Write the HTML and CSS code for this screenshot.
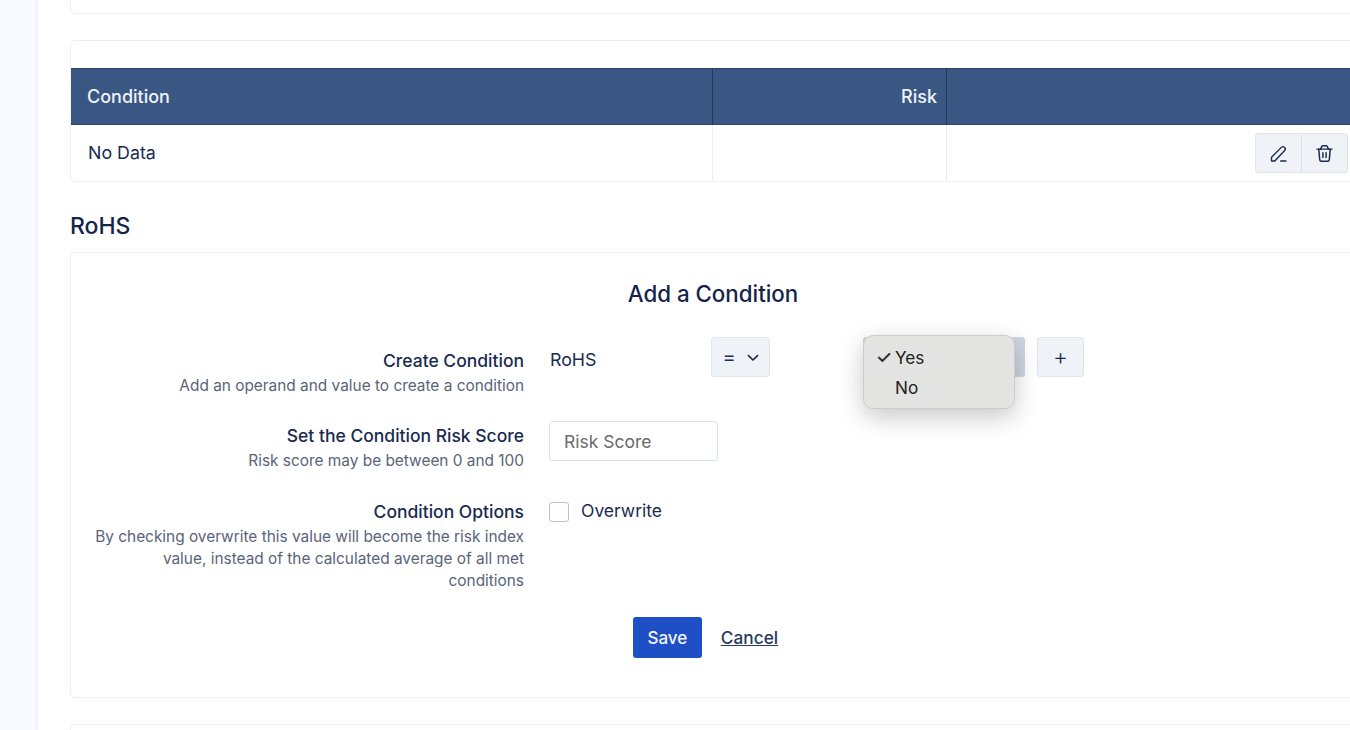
FILE: index.html
```html
<!DOCTYPE html>
<html lang="en">
<head>
<meta charset="utf-8">
<title>RoHS Conditions</title>
<link rel="stylesheet" href="styles.css">
</head>
<body>
<div class="page">
  <aside class="sidebar"></aside>
  <main class="main">
    <div class="card card-stub"></div>
    <div class="card table-card">
      <div class="table-gap"></div>
      <div class="row head">
        <div class="cell c1">Condition</div>
        <div class="cell c2">Risk</div>
        <div class="cell c3"></div>
      </div>
      <div class="row body">
        <div class="cell c1"><span class="no-data">No Data</span></div>
        <div class="cell c2"></div>
        <div class="cell c3">
          <div class="btn-group">
            <button class="icon-btn" aria-label="Edit">
              <svg viewBox="0 0 24 24" width="21" height="21" fill="none" stroke="currentColor" stroke-width="1.600" stroke-linecap="round" stroke-linejoin="round"><path d="M4 20.500v-4.200L15.300 5a2.500 2.500 0 0 1 3.500 0l.2.200a2.500 2.500 0 0 1 0 3.500L7.800 20.500z"/><path d="M14.500 20.500h6"/></svg>
            </button>
            <button class="icon-btn" aria-label="Delete">
              <svg viewBox="0 0 24 24" width="21" height="21" fill="none" stroke="currentColor" stroke-width="1.700" stroke-linecap="round" stroke-linejoin="round"><path d="M3.500 7h17"/><path d="M7.500 7l1.300-3a1.500 1.500 0 0 1 1.400-.9h3.600a1.500 1.500 0 0 1 1.400.9l1.300 3"/><path d="M5.500 7l1 12a2 2 0 0 0 2 1.800h7a2 2 0 0 0 2-1.800l1-12"/><path d="M10.200 11v5.500M13.800 11v5.500"/></svg>
            </button>
          </div>
        </div>
      </div>
    </div>
    <h2 class="section-title">RoHS</h2>
    <div class="card form-card">
      <h3 class="form-title">Add a Condition</h3>
      <div class="form-row row-condition">
        <div class="label-col">
          <div class="label">Create Condition</div>
          <div class="hint">Add an operand and value to create a condition</div>
        </div>
        <div class="field-col">
          <span class="field-name">RoHS</span>
          <button class="op-btn"><span class="op-sign">=</span>
            <svg class="chev" viewBox="0 0 12 8" width="12" height="8" fill="none" stroke="currentColor" stroke-width="1.700" stroke-linecap="round" stroke-linejoin="round"><path d="M1.500 1.700L6 6l4.500-4.300"/></svg>
          </button>
          <div class="select-under"></div>
          <button class="op-btn plus">+</button>
          <div class="popup">
            <div class="popup-item"><span class="tick">✓</span>Yes</div>
            <div class="popup-item"><span class="tick"></span>No</div>
          </div>
        </div>
      </div>
      <div class="form-row row-score">
        <div class="label-col">
          <div class="label">Set the Condition Risk Score</div>
          <div class="hint">Risk score may be between 0 and 100</div>
        </div>
        <div class="field-col">
          <input class="score" type="text" placeholder="Risk Score">
        </div>
      </div>
      <div class="form-row row-options">
        <div class="label-col">
          <div class="label">Condition Options</div>
          <div class="hint">By checking overwrite this value will become the risk index value, instead of the calculated average of all met conditions</div>
        </div>
        <div class="field-col">
          <span class="checkbox"></span>
          <span class="check-label">Overwrite</span>
        </div>
      </div>
      <div class="actions">
        <button class="save">Save</button>
        <a class="cancel" href="#">Cancel</a>
      </div>
    </div>
    <div class="card card-next"></div>
  </main>
</div>
</body>
</html>
```
FILE: styles.css
```css
* { box-sizing: border-box; }
html, body { margin: 0; padding: 0; height: 100%; overflow: hidden; background: #fff; }
body { font-family: Inter, "Liberation Sans", sans-serif; color: #1a2b50; font-size: 16px; }
.page { display: flex; width: 1350px; height: 730px; overflow: hidden; }
.sidebar { width: 38px; flex: none; background: #f8faff; border-right: 2px solid #eef1f6; }
.main { flex: none; width: 1318px; padding-left: 32px; }
.card { width: 1286px; background: #fff; border: 1.500px solid #eceff4; border-radius: 5px; }
.card-stub { height: 14px; border-top: 0; border-radius: 0 0 5px 5px; margin-bottom: 26px; }
.table-card { height: 142px; }
.table-gap { height: 27px; }
.row { display: flex; }
.head { height: 57px; background: #3a5783; color: #f0f3f8; font-weight: 500; font-size: 18px; border-top: 1px solid #2e4669; border-bottom: 1px solid #2e4669; }
.body { height: 56px; font-size: 17.800px; }
.no-data { padding-bottom: 2px; }
.cell { display: flex; align-items: center; padding: 0 17px; }
.c1 { width: 641px; }
.c2 { width: 234px; justify-content: flex-end; padding: 0 9px; border-left: 1px solid #e9ecf2; }
.c3 { flex: 1; border-left: 1px solid #e9ecf2; justify-content: flex-end; padding: 0 7px; }
.head .c2, .head .c3 { border-left-color: #22375a; }
.head .c1 { padding-left: 16px; }
.btn-group { display: flex; width: 93px; height: 40px; background: #eff2f7; border: 1px solid #e0e4eb; border-radius: 3px; }
.icon-btn { flex: 1; display: flex; align-items: center; justify-content: center; padding: 0; border: 0; background: transparent; color: #1a2b50; }
.icon-btn + .icon-btn { border-left: 1px solid #dcdfe6; }
.section-title { margin: 30px 0 12px; font-size: 23px; line-height: 28px; font-weight: 500; color: #14244a; }
.form-card { height: 446px; padding-top: 27px; }
.form-title { margin: 0; text-align: center; font-size: 22.300px; line-height: 28px; font-weight: 500; color: #14244a; }
.form-row { display: flex; gap: 25px; }
.row-condition { margin-top: 29px; height: 84px; }
.row-score { height: 76px; }
.row-options { height: 120px; }
.label-col { width: 453px; flex: none; text-align: right; padding-top: 2px; }
.row-condition .label-col { padding-top: 11px; }
.label { font-size: 17.500px; line-height: 25px; font-weight: 500; color: #1a2b50; }
.hint { font-size: 15.400px; line-height: 22px; margin-top: 2px; color: #5a6478; padding-left: 20px; }
.field-col { position: relative; flex: 1; display: flex; align-items: flex-start; }
.field-name { width: 162px; margin-top: 11px; padding-left: 1px; font-size: 17.800px; line-height: 24px; }
.op-btn { display: flex; align-items: center; justify-content: center; gap: 11px; width: 59px; height: 40px; padding: 0; background: #eff2f7; border: 1px solid #e0e4eb; border-radius: 3px; font: 400 20px Inter, sans-serif; color: #1a2b50; }
.chev { margin-top: 1px; }
.plus { position: absolute; left: 488px; top: 0; width: 47px; font-size: 23px; font-weight: 300; }
.select-under { position: absolute; left: 314px; top: 0; width: 162px; height: 40px; background: #cdd5e0; border-radius: 3px; }
.popup { position: absolute; left: 314px; top: -2px; width: 152px; height: 74px; padding-top: 6px; background: #e3e3e1; border: 1px solid #cdcdcb; border-radius: 10px; box-shadow: 0 8px 24px rgba(0,0,0,.22); color: #222; font-size: 17.200px; }
.popup-item { display: flex; align-items: center; height: 30px; padding-left: 12px; }
.tick { width: 19px; font-size: 18px; font-weight: 400; -webkit-text-stroke: .4px #222; }
.score { width: 169px; height: 40px; padding: 0 14px; border: 1.500px solid #dde2ea; border-radius: 3px; font: 17.500px Inter, sans-serif; color: #333; background: #fff; outline: 0; }
.score::placeholder { color: #6b6b6b; opacity: 1; }
.checkbox { width: 20px; height: 20px; margin-top: 5px; border: 1.500px solid #b5c3d8; border-radius: 3px; background: #fff; flex: none; }
.check-label { margin-left: 12px; margin-top: 2px; font-size: 17.500px; line-height: 24px; }
.actions { display: flex; align-items: center; justify-content: center; gap: 19px; padding-right: 15px; }
.save { width: 69px; height: 41px; background: #1f4fc4; border: 0; border-radius: 3px; color: #f2f5fb; font: 500 17px Inter, sans-serif; }
.cancel { font-size: 17.300px; font-weight: 500; color: #2a3a5c; }
.card-next { height: 40px; margin-top: 26px; }
```
